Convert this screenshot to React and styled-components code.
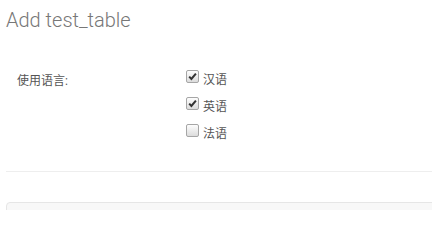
import React from "react";
import styled, { createGlobalStyle } from "styled-components";

const Global = createGlobalStyle`
  html, body { margin: 0; padding: 0; background: #fff; }
  body { font-family: Roboto, "Noto Sans CJK SC", sans-serif; overflow: hidden; }
`;

const Page = styled.div`
  padding: 0 0 0 6px;
  width: 432px;
  height: 210px;
  overflow: hidden;
  box-sizing: border-box;
`;

const Title = styled.h3`
  margin: 0;
  padding-top: 8px;
  font-family: Roboto, sans-serif;
  font-weight: 300;
  font-size: 20px;
  line-height: 24px;
  color: #777;
`;

const Form = styled.div`
  display: grid;
  grid-template-columns: 180px 1fr;
  margin-top: 36px;
  padding-bottom: 25px;
  margin-right: -10px;
  border-bottom: 1px solid #eee;
`;

const Label = styled.div`
  padding-left: 11px;
  font-family: Roboto, "Noto Sans CJK SC", sans-serif;
  font-size: 12px;
  line-height: 26px;
  color: #555;
`;

const Options = styled.div`
  display: flex;
  flex-direction: column;
  margin-top: -3px;
`;

const Option = styled.label`
  display: flex;
  align-items: center;
  height: 27px;
  font-family: "Noto Sans CJK SC", sans-serif;
  font-size: 12px;
  color: #555;
  gap: 4px;
`;

const Box = styled.span`
  width: 11px;
  height: 11px;
  border: 1px solid #a6a6a6;
  border-radius: 2px;
  background: linear-gradient(#fdfdfd, #dcdcdc);
  display: flex;
  align-items: center;
  justify-content: center;
  margin-top: -4px;
  box-sizing: content-box;
`;

const Well = styled.div`
  margin-top: 30px;
  margin-right: -10px;
  height: 40px;
  background: #f8f8f8;
  border: 1px solid #e6e6e6;
  border-radius: 4px;
`;

const Check = () => (
  <svg width="9" height="9" viewBox="0 0 9 9">
    <path d="M1.2 4.6 L3.4 7 L7.9 1.6" fill="none" stroke="#333" strokeWidth="2" />
  </svg>
);

const options = [
  { name: "汉语", checked: true },
  { name: "英语", checked: true },
  { name: "法语", checked: false },
];

export default function App() {
  return (
    <Page>
      <Global />
      <Title>Add test_table</Title>
      <Form>
        <Label>使用语言:</Label>
        <Options>
          {options.map((o) => (
            <Option key={o.name}>
              <Box>{o.checked && <Check />}</Box>
              {o.name}
            </Option>
          ))}
        </Options>
      </Form>
      <Well />
    </Page>
  );
}
